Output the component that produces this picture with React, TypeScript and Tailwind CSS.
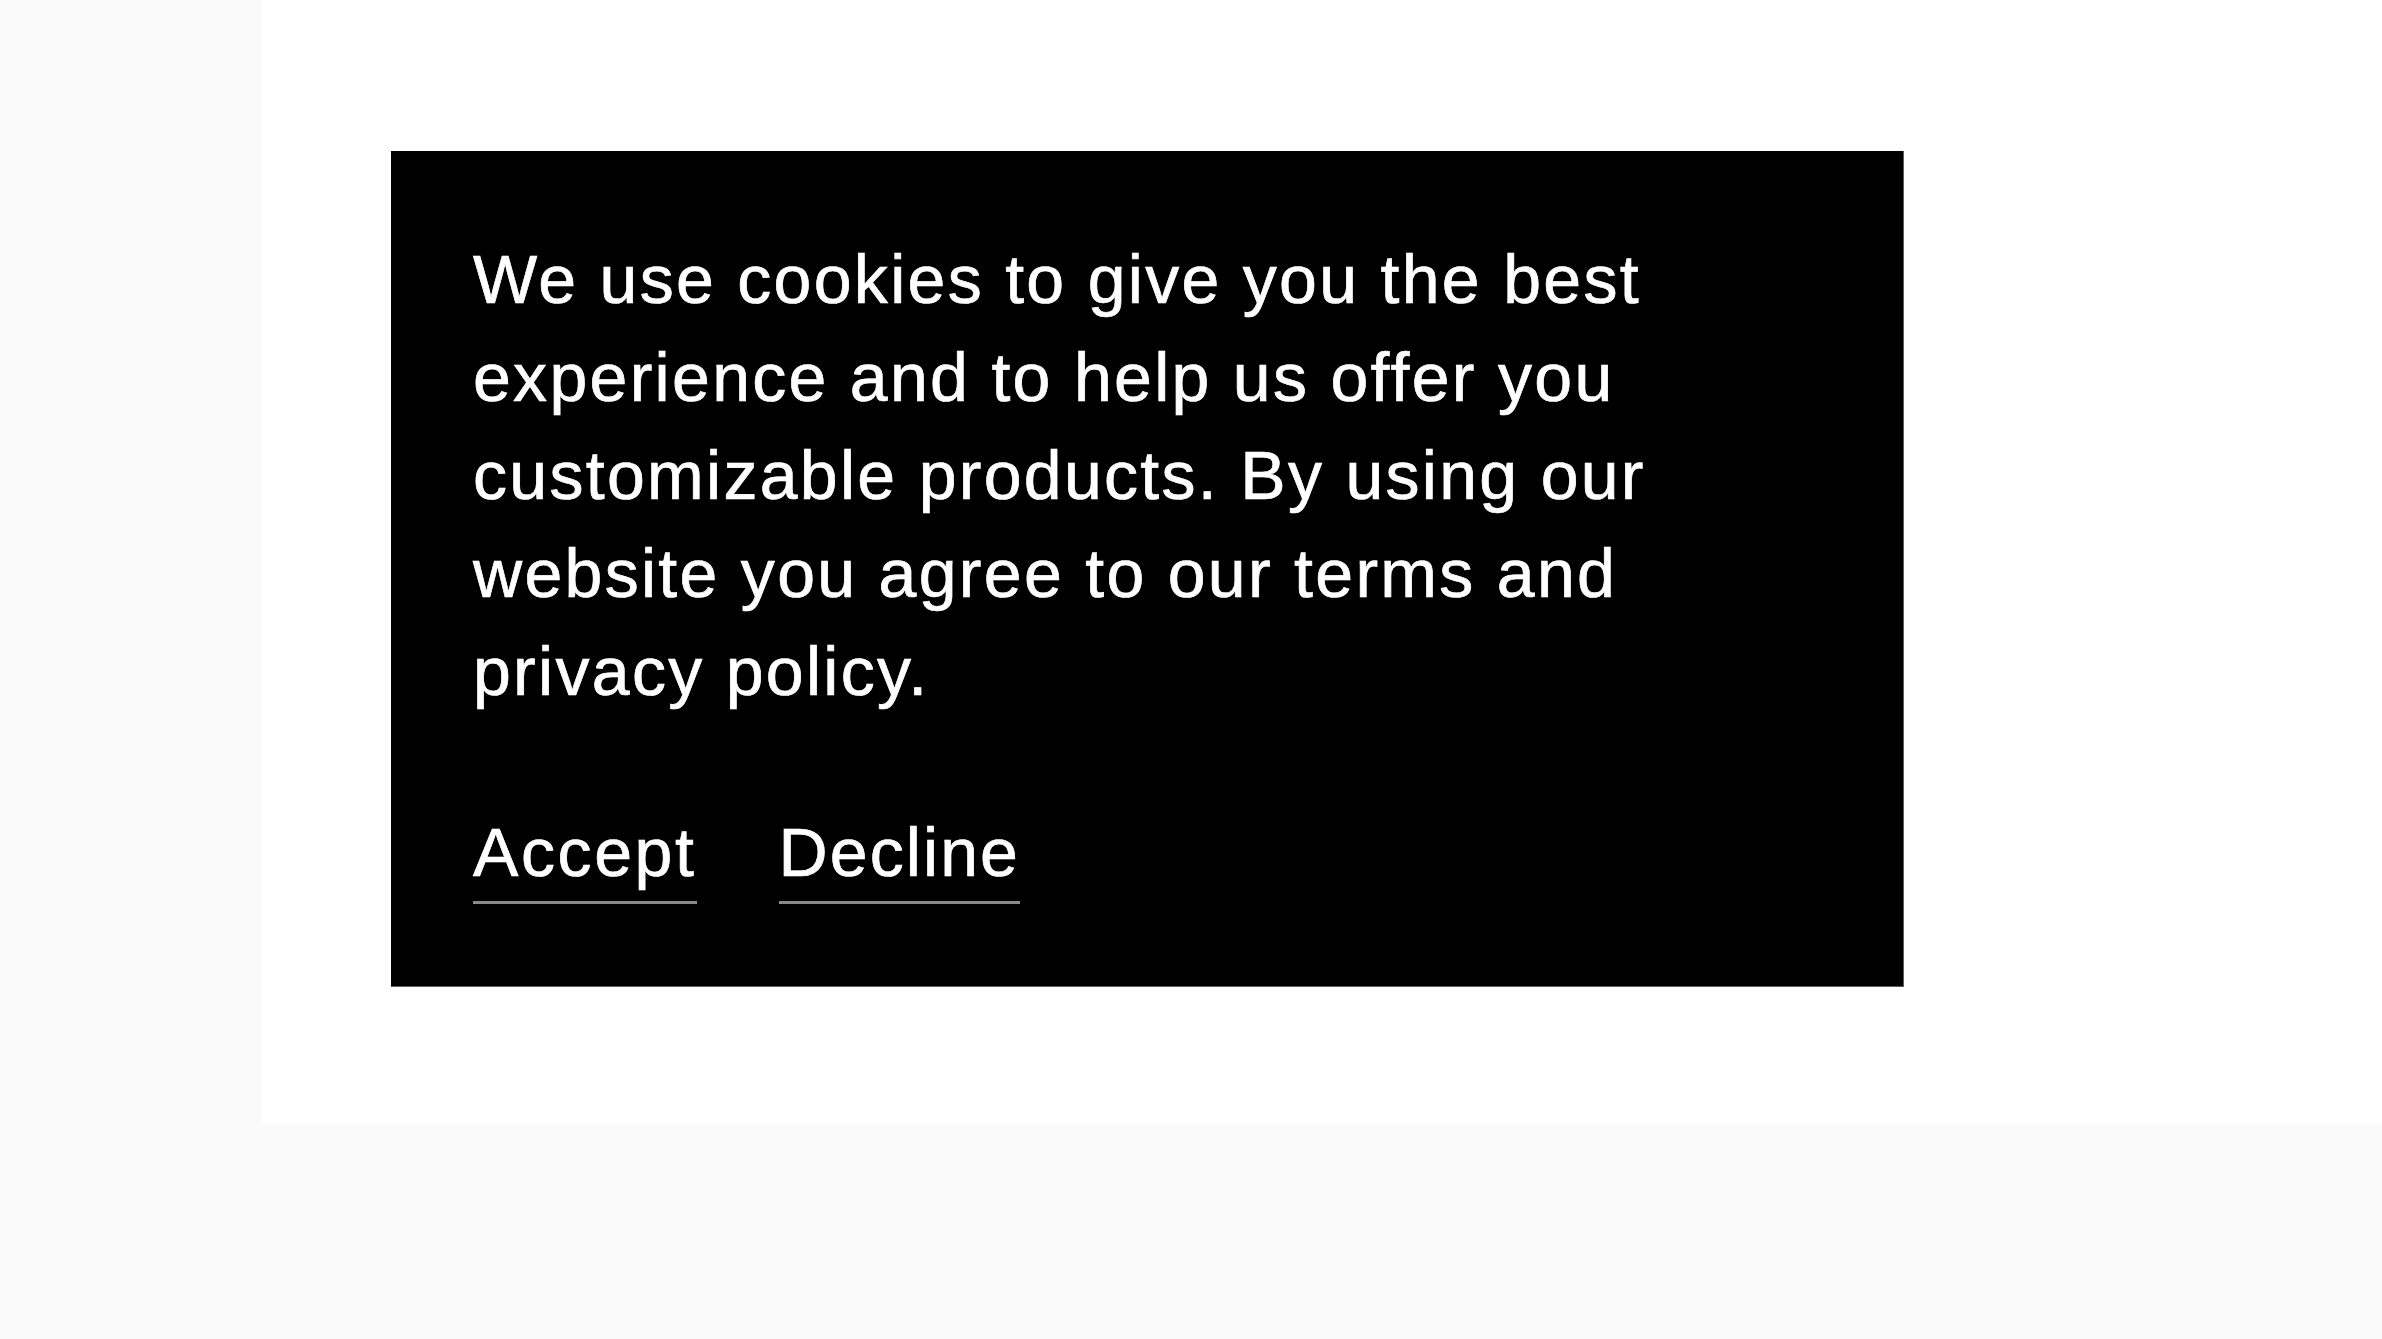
export default function App() {
  return (
    <div className="flex h-[1339px] w-full flex-col bg-[#fafafa] font-['Liberation_Sans',Arial,sans-serif]">
      <div className="flex h-[1124px]">
        <div className="w-[261px] shrink-0 bg-[#fafafa]" />
        <main className="flex-1 bg-white pl-[130px] pt-[151px]">
          <section className="w-[1513px] border-b border-r border-[#5c5c5c] bg-black pb-[82px] pl-[82px] pr-[82px] pt-[79px] text-white [-webkit-text-stroke:0.7px_white]">
            <p className="text-[68px] leading-[98px] tracking-[2.3px]">
              We use cookies to give you the best experience and to help us offer you customizable
              products. By using our website you agree to our terms and privacy policy.
            </p>
            <div className="mt-[98px] flex gap-[82px]">
              <button className="border-b-[3px] border-[#8a8a8a] pb-[15px] text-[68px] leading-none tracking-[2.6px]">
                Accept
              </button>
              <button className="border-b-[3px] border-[#8a8a8a] pb-[15px] text-[68px] leading-none tracking-[2.1px]">
                Decline
              </button>
            </div>
          </section>
        </main>
      </div>
    </div>
  );
}
